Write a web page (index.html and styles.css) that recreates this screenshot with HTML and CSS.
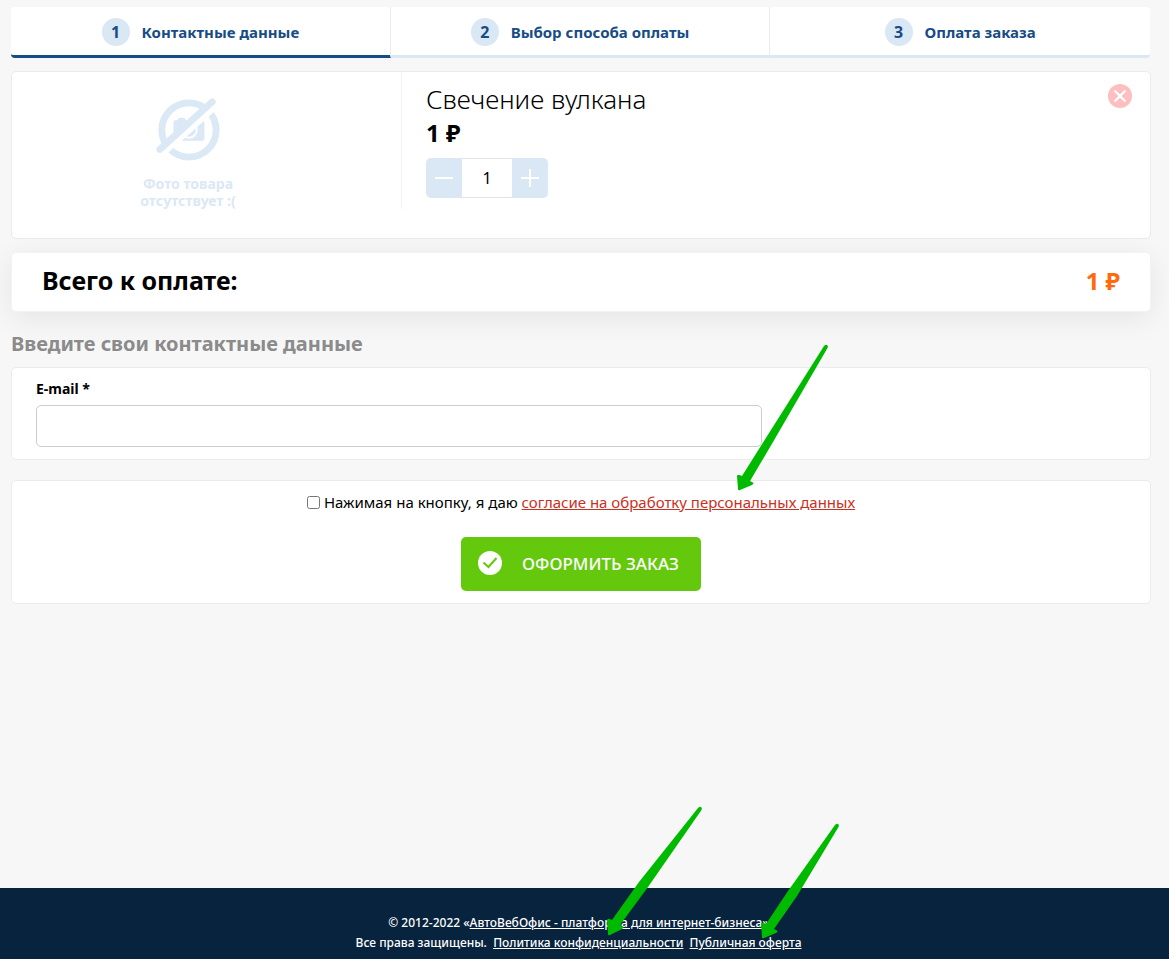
FILE: index.html
```html
<!DOCTYPE html>
<html lang="ru">
<head>
    <meta charset="UTF-8">
    <meta name="viewport" content="width=device-width, initial-scale=1.0">
    <title>Оформление заказа</title>
    <link rel="stylesheet" href="styles.css">
</head>
<body>

    <main class="checkout">
        <ol class="steps">
            <li class="step active"><span class="step-number">1</span>Контактные данные</li>
            <li class="step"><span class="step-number">2</span>Выбор способа оплаты</li>
            <li class="step"><span class="step-number">3</span>Оплата заказа</li>
        </ol>

        <section class="card product">
            <div class="product-photo">
                <svg width="66" height="66" viewBox="0 0 66 66" aria-hidden="true">
                    <circle cx="34" cy="34" r="28" fill="none" stroke="#dbe8f5" stroke-width="7"/>
                    <path d="M18 26q0-2 2-2h2l1-1.500q.5-1 2-1h3q1.500 0 2 1l1 1.500h16q3 0 3 3v16q0 2-2 2H20q-2 0-2-2z" fill="#dbe8f5"/>
                    <circle cx="34" cy="34" r="8" fill="none" stroke="#fff" stroke-width="2"/>
                    <path d="M3 62L66 6" stroke="#fff" stroke-width="6"/>
                    <path d="M4 54L58 5" stroke="#dbe8f5" stroke-width="7" stroke-linecap="round"/>
                </svg>
                <p>Фото товара<br>отсутствует :(</p>
            </div>
            <div class="product-info">
                <h1>Свечение вулкана</h1>
                <div class="price">1 ₽</div>
                <div class="quantity">
                    <button type="button" class="minus" aria-label="Меньше">
                        <svg width="20" height="20" viewBox="0 0 20 20"><path d="M1 10h18" stroke="#fff" stroke-width="2"/></svg>
                    </button>
                    <input type="text" id="quantity" value="1" aria-label="Количество">
                    <button type="button" class="plus" aria-label="Больше">
                        <svg width="20" height="20" viewBox="0 0 20 20"><path d="M1 10h18M10 1v18" stroke="#fff" stroke-width="2"/></svg>
                    </button>
                </div>
            </div>
            <button type="button" class="remove" aria-label="Удалить">
                <svg width="24" height="24" viewBox="0 0 24 24"><circle cx="12" cy="12" r="12" fill="#ffbebe"/><path d="M6.500 6.500l11 11M17.500 6.500l-11 11" stroke="#fff" stroke-width="2.400"/></svg>
            </button>
        </section>

        <section class="total">
            <span>Всего к оплате:</span>
            <span class="total-sum">1 ₽</span>
        </section>

        <form class="order-form">
            <h2>Введите свои контактные данные</h2>
            <div class="card contacts">
                <label for="email">E-mail *</label>
                <input type="email" id="email">
            </div>
            <div class="card submit">
                <div class="agree">
                    <input type="checkbox" id="agree">
                    <label for="agree">Нажимая на кнопку, я даю <a href="#">согласие на обработку персональных данных</a></label>
                </div>
                <button type="submit" class="order-button">
                    <svg width="24" height="24" viewBox="0 0 24 24" aria-hidden="true"><circle cx="12" cy="12" r="12" fill="#fff"/><path d="M5.500 11.500l5 4.500 8-9" fill="none" stroke="#64c90c" stroke-width="2"/></svg>
                    ОФОРМИТЬ ЗАКАЗ
                </button>
            </div>
        </form>
    </main>

    <footer class="footer">
        <p>© 2012-2022 «<a href="#">АвтоВебОфис - платформа для интернет-бизнеса</a>»</p>
        <p>Все права защищены. &nbsp;<a href="#">Политика конфиденциальности</a>&nbsp; <a href="#">Публичная оферта</a></p>
    </footer>

    <!-- arrows pointing at the document links -->
    <svg class="arrow arrow-agree" width="92" height="148" viewBox="0 0 92 148" aria-hidden="true">
        <path d="M87 2q2-2 3-1 1.500 1 .5 3L36 98 13 137l3 1.500q1.500 1-1 2.500L3 146q-2 1-2-1L0 132q1-2 2.500-1L5 132 27 97z"/>
    </svg>
    <svg class="arrow arrow-policy" width="96" height="132" viewBox="0 0 96 132" aria-hidden="true">
        <path d="M91 2q2-2 3-1 1.500 1 .5 3L41 81 13 119l3 1.500q1.500 1-1 2.500L3 129q-2 1-2-1L0 114q1-2 2.500-1L5 114 32 76z"/>
    </svg>
    <svg class="arrow arrow-offer" width="79" height="118" viewBox="0 0 79 118" aria-hidden="true">
        <path d="M74 2q2-2 3-1 1.500 1 .5 3L36 73 13 106l3 1.500q1.500 1-1 2.500L3 115q-2 1-2-1L0 101q1-2 2.500-1L5 101 27 68z"/>
    </svg>

</body>
</html>
```

FILE: styles.css
```css
* {
    box-sizing: border-box;
}

body {
    position: relative;
    display: flex;
    flex-direction: column;
    min-height: 100vh;
    margin: 0;
    background-color: #f7f7f7;
    color: #000;
    font-family: "Noto Sans", sans-serif;
    font-size: 15px;
}

h1, h2, p {
    margin: 0;
}

button {
    padding: 0;
    border: 0;
    font-family: inherit;
    cursor: pointer;
}

button svg {
    display: block;
}

.checkout {
    flex: 1;
    padding: 7px 18px 0 11px;
}

.card {
    border: 1px solid #ebebeb;
    border-radius: 5px;
    background-color: #fff;
}

.steps {
    display: grid;
    grid-template-columns: repeat(3, 1fr);
    margin: 0 1px 13px 0;
    padding: 0;
    list-style: none;
}

.step {
    display: flex;
    justify-content: center;
    align-items: center;
    gap: 12px;
    height: 51px;
    padding-top: 2px;
    border-right: 1px solid #ebebeb;
    border-bottom: 3px solid #dae7f4;
    background-color: #fff;
    color: #174c84;
    font-size: 15px;
    font-weight: bold;
}

.step:first-child {
    border-radius: 4px 0 0 4px;
}

.step:last-child {
    border-right: 0;
    border-radius: 0 4px 4px 0;
}

.step.active {
    border-bottom-color: #174c84;
}

.step-number {
    width: 28px;
    border-radius: 50%;
    background-color: #dae7f4;
    font-size: 16px;
    line-height: 28px;
    text-align: center;
}

.product {
    display: flex;
    min-height: 168px;
    margin-bottom: 13px;
}

.product-photo {
    display: flex;
    flex-direction: column;
    align-items: center;
    gap: 14px;
    width: 390px;
    height: 137px;
    padding: 25px 37px 0 0;
    border-right: 1px solid #f3f3f3;
    color: #dbe8f5;
    font-size: 14px;
    font-weight: bold;
    line-height: 17px;
    text-align: center;
}

.product-info {
    flex: 1;
    padding: 10px 24px;
}

.product-info h1 {
    font-size: 26px;
    font-weight: 300;
    line-height: 34px;
}

.price {
    font-size: 24px;
    font-weight: bold;
    line-height: 34px;
}

.quantity {
    display: flex;
    width: 122px;
    height: 40px;
    margin-top: 8px;
    border-radius: 5px;
    overflow: hidden;
}

.quantity button {
    display: flex;
    justify-content: center;
    align-items: center;
    width: 36px;
    background-color: #dae7f4;
}

.quantity input {
    width: 50px;
    padding: 0;
    border: solid #e3e3e3;
    border-width: 1px 0;
    font-family: inherit;
    font-size: 16px;
    text-align: center;
}

.remove {
    align-self: flex-start;
    margin: 12px 18px;
    background: none;
}

.total {
    display: flex;
    justify-content: space-between;
    align-items: center;
    height: 60px;
    padding: 0 30px 4px;
    border: 1px solid #f3f3f3;
    border-radius: 5px;
    background-color: #fff;
    box-shadow: 0 6px 30px rgba(0, 0, 0, 0.08);
    font-size: 25px;
    font-weight: bold;
}

.total-sum {
    color: #ff6a0f;
    font-size: 24px;
}

.order-form h2 {
    margin: 17px 0 8px;
    color: #8b8b8b;
    font-size: 20px;
    line-height: 30px;
}

.contacts {
    display: flex;
    flex-direction: column;
    padding: 11px 24px 12px;
}

.contacts label {
    margin-bottom: 6px;
    font-size: 14px;
    font-weight: bold;
    line-height: 20px;
}

.contacts input {
    width: 100%;
    max-width: 726px;
    height: 42px;
    padding: 0 12px;
    border: 1px solid #ccc;
    border-radius: 5px;
    font-family: inherit;
    font-size: 16px;
}

.submit {
    display: flex;
    flex-direction: column;
    align-items: center;
    gap: 25px;
    margin-top: 20px;
    padding: 11px 12px 12px;
}

.agree {
    display: flex;
    align-items: center;
    gap: 4px;
    line-height: 20px;
}

.agree input {
    width: 13px;
    height: 13px;
    margin: 0;
}

.agree a {
    color: #c9301f;
}

.order-button {
    display: flex;
    align-items: center;
    gap: 20px;
    height: 54px;
    padding: 0 22px 2px 17px;
    border-radius: 5px;
    background-color: #64c90c;
    color: #fff;
    font-size: 17px;
    font-weight: 500;
}

.footer {
    padding: 25px 12px 6px 0;
    background-color: #08233d;
    color: #fff;
    font-size: 12px;
    font-weight: 500;
    line-height: 20px;
    text-align: center;
}

.footer a {
    color: #fff;
}

.arrow {
    position: absolute;
    fill: #00ba00;
    pointer-events: none;
}

.arrow-agree {
    top: 344px;
    left: 737px;
}

.arrow-policy {
    top: 806px;
    left: 607px;
}

.arrow-offer {
    top: 823px;
    left: 761px;
}
```
